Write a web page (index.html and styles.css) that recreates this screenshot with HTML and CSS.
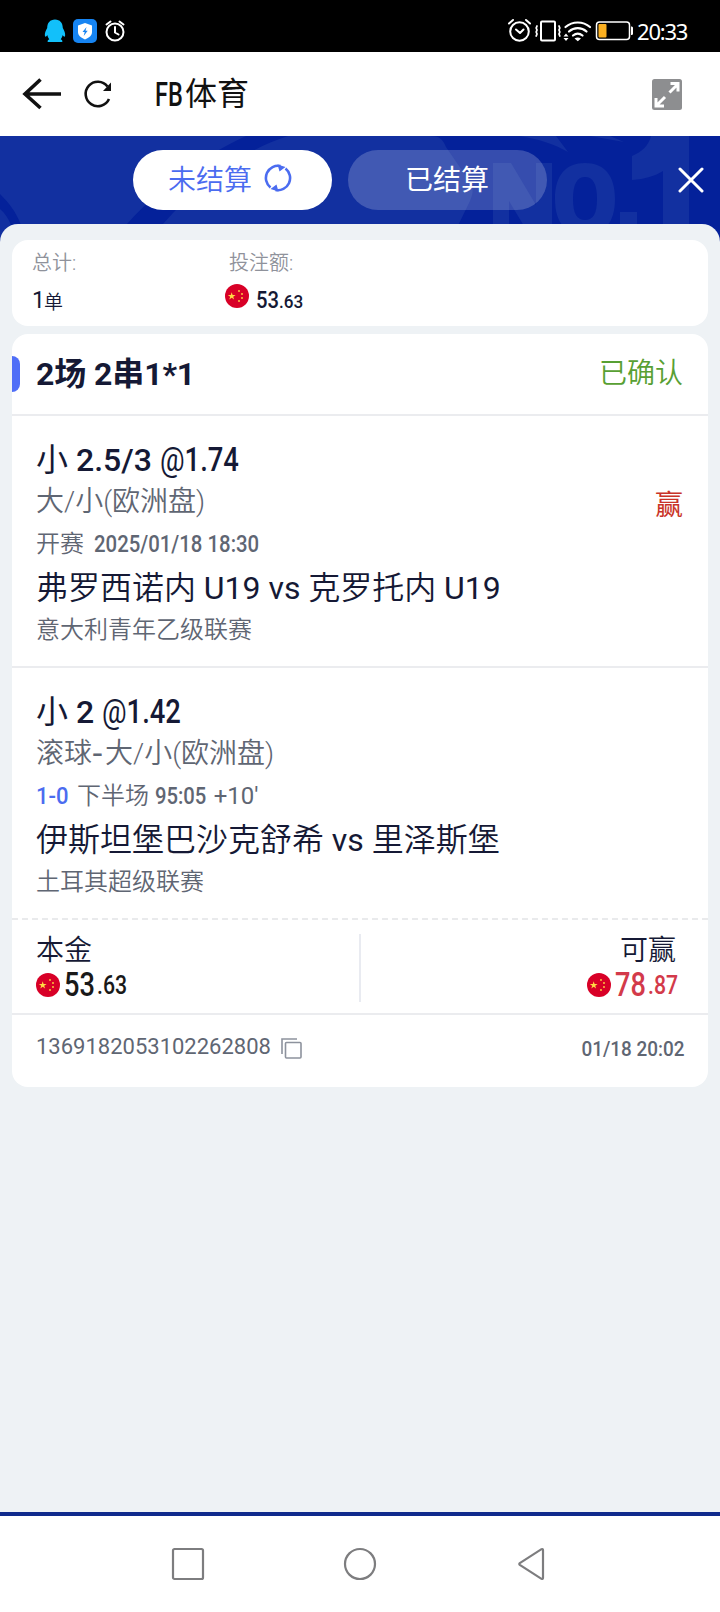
FILE: index.html
```html
<!DOCTYPE html>
<html lang="zh-CN">
<head>
<meta charset="utf-8">
<title>FB体育</title>
<link rel="stylesheet" href="styles.css">
</head>
<body>
<svg class="defs" width="0" height="0">
  <symbol id="flag" viewBox="0 0 24 24">
    <circle cx="12" cy="12" r="12" fill="#d80027"/>
    <path d="M6.700 8.200l.9 2.800h3l-2.400 1.700.9 2.800-2.400-1.700-2.400 1.700.9-2.800L2.800 11h3z" fill="#ffda44"/>
    <g fill="#ffda44"><circle cx="14" cy="7" r=".9"/><circle cx="17" cy="10" r=".9"/><circle cx="17" cy="14" r=".9"/><circle cx="14" cy="17" r=".9"/></g>
  </symbol>
</svg>
<div class="screen">
  <div class="status">
    <svg class="status-left" width="86" height="28" viewBox="44 17 86 28">
      <path d="M55 19.500c5 0 7.800 3.500 7.800 8.500 1.500 2.500 2.700 5.500 2.300 7.800-.3 1.500-1.500.8-2.400-.8-.4 1.800-1 3-2 4.200 1.300.6 1.900 1.400 1.600 2.800h-14.600c-.3-1.400.3-2.200 1.600-2.800-1-1.200-1.600-2.400-2-4.200-.9 1.600-2.100 2.300-2.400.8-.4-2.300.8-5.300 2.300-7.800 0-5 2.800-8.500 7.800-8.500z" fill="#12c0fa"/>
      <rect x="73" y="19" width="24" height="24" rx="5" fill="#1684f2"/>
      <path d="M85 23l7 2.500v6.500c0 3.500-3 5.800-7 7.500-4-1.700-7-4-7-7.500v-6.500z" fill="#fff"/>
      <path d="M86.500 27l-4 5h2.200l-1 4 4-5.200h-2.200z" fill="#1684f2"/>
      <g fill="none" stroke="#fff" stroke-width="2" stroke-linecap="round"><circle cx="115" cy="32" r="8.500"/><path d="M115 27v5.500l3.500 2M106.500 24.500l4-3M123.500 24.500l-4-3"/></g>
    </svg>
    <div class="status-right">
      <svg width="130" height="26" viewBox="507 18 130 26">
        <g fill="none" stroke="#fff" stroke-width="2" stroke-linecap="round" stroke-linejoin="round">
          <circle cx="520.500" cy="31.500" r="9.300"/><path d="M517 29.500l4 3.500 3.500-3.500M510 23.500l4-3.500M531 23.500l-4-3.500"/>
          <rect x="542" y="21.500" width="14" height="19" rx="1"/>
          <path d="M538 26l-.8 2 .8 2-.8 2 .8 2-.8 2M560 26l.8 2-.8 2 .8 2-.8 2 .8 2" stroke-width="1.800"/>
          <path d="M566.500 27c7-6 17.500-6 24.500 0M570 31.500c5-4.500 12.500-4.500 17.500 0M574 35.500c3-2.500 6.500-2.500 9.500 0" stroke-width="2.200"/>
          <rect x="597.500" y="22" width="33" height="17.500" rx="3" stroke-width="1.500"/>
        </g>
        <path d="M575.500 38.500c2-1.500 4.500-1.500 6.500 0l-3.200 2.700zM564.500 36.500l2.500-3 2.500 3zM564.500 38l2.500 3 2.500-3zM632 26.500c1.500 0 2 .5 2 1.500v5.500c0 1-.5 1.500-2 1.500z" fill="#fff"/>
        <rect x="599.500" y="24" width="8" height="13.500" rx="1" fill="#fbb021"/>
      </svg>
      <span class="clock">20:33</span>
    </div>
  </div>

  <div class="appbar">
    <svg width="90" height="32" viewBox="22 78 90 32" fill="none" stroke="#111">
      <path d="M40.500 79.500L25 94l15.500 14M25 94h36" stroke-width="3.600"/>
      <path d="M109 99a12.200 12.200 0 1 1-1.500-12.500" stroke-width="2.600"/>
      <path d="M111 82.500v8.500h-8z" fill="#111" stroke="none"/>
    </svg>
    <h1 class="title"><span class="title-latin">FB</span>体育</h1>
    <svg class="expand" width="30" height="31" viewBox="0 0 30 31">
      <rect width="30" height="31" rx="2.500" fill="#8d8e90"/>
      <g fill="none" stroke="#fff" stroke-width="3"><path d="M17.500 13.500l8-8M18.500 4.500h7.500v8M13 18l-8 8M4 19v8h8"/></g>
    </svg>
  </div>

  <div class="tabs">
    <svg class="tabs-art" width="720" height="110" viewBox="0 136 720 110">
      <rect y="136" width="720" height="110" fill="#04219a"/>
      <path d="M0 136h430c9 0 13 3 16 11l24 35c4 7 3 12 0 19l-22 45H0z" fill="#1230a0"/>
      <path d="M246 136h42c-45 14-90 48-125 88l-20 22h-38l22-22c38-42 80-70 119-88zM0 194c9 9 16 18 21 31h-10c-3-7-6-12-11-16z" fill="#04219a"/>
      <path d="M519 136h37l12 16c-14-8-29-13-49-16zM590 136h20l14 6z" fill="#1230a0"/>
      <g fill="#1230a0">
        <path d="M493 163h18l25 42v-42h16v83h-16l-27-45v45h-16z"/>
        <path fill-rule="evenodd" d="M585 163c19 0 30 12 30 36s-11 36-30 36-30-12-30-36 11-36 30-36zm0 14c-8 0-12 7-12 22s4 21 12 21 12-6 12-21-4-22-12-22z"/>
        <path d="M620 212h17v20h-17zM651 136h38v110h-26v-75c-8 5-18 8-31 9v-24c10-4 17-11 19-20z"/>
      </g>
    </svg>
    <div class="pill pill-active">未结算
      <svg width="28" height="28" viewBox="0 0 28 28" fill="none" stroke="#4b6cf0" stroke-width="2.600"><path d="M6.500 23.500a12.200 12.200 0 0 1 10-21.500M21.500 4.500a12.200 12.200 0 0 1-10 21.500"/><path d="M13.500.5l8 2.500-6 4.500zM14.500 27.500l-8-2.500 6-4.500z" fill="#4b6cf0" stroke="none"/></svg>
    </div>
    <div class="pill">已结算</div>
    <svg class="close" width="26" height="26" viewBox="0 0 26 26" stroke="#fff" stroke-width="3" stroke-linecap="round"><path d="M2 2l22 22M24 2L2 24"/></svg>
  </div>

  <main class="panel">
    <section class="card summary">
      <div class="sum-item"><div class="sum-label">总计:</div><div class="sum-value"><span class="din sum-count">1</span><small>单</small></div></div>
      <div class="sum-item"><div class="sum-label sum-label-in">投注额:</div><div class="sum-value"><svg class="flag"><use href="#flag"/></svg><span class="din sum-int">53</span><span class="din sum-dec">.63</span></div></div>
    </section>

    <section class="card ticket">
      <header class="ticket-head"><i class="marker"></i><h2 class="ticket-title">2场 2串1*1</h2><span class="ok">已确认</span></header>

      <article class="event">
        <div class="pick"><span class="side">小</span> 2.5/3 <span class="din odds"><span class="at">@</span>1.74</span></div>
        <div class="market">大/小(欧洲盘)</div>
        <div class="meta">开赛 <span class="din kick">2025/01/18 18:30</span></div>
        <div class="teams">弗罗西诺内 <span class="latin">U19 vs</span> 克罗托内 <span class="latin">U19</span></div>
        <div class="league">意大利青年乙级联赛</div>
        <span class="won">赢</span>
      </article>

      <article class="event">
        <div class="pick"><span class="side">小</span> 2 <span class="din odds"><span class="at">@</span>1.42</span></div>
        <div class="market">滚球<span class="hyphen">-</span>大/小(欧洲盘)</div>
        <div class="meta"><span class="din score">1-0</span>下半场 <span class="din period">95:05</span> <span class="latin">+10'</span></div>
        <div class="teams">伊斯坦堡巴沙克舒希 <span class="latin">vs</span> 里泽斯堡</div>
        <div class="league">土耳其超级联赛</div>
      </article>

      <svg class="dash" width="696" height="2"><path d="M0 1h696" stroke="#e9eaec" stroke-width="2" stroke-dasharray="6 4"/></svg>
      <div class="money">
        <div class="stake"><div class="money-label">本金</div><div class="amount"><svg class="flag"><use href="#flag"/></svg><span class="din int">53</span><span class="din dec">.63</span></div></div>
        <i class="split"></i>
        <div class="stake win"><div class="money-label">可赢</div><div class="amount red"><svg class="flag"><use href="#flag"/></svg><span class="din int">78</span><span class="din dec">.87</span></div></div>
      </div>
      <footer class="foot">
        <span class="order">1369182053102262808</span>
        <svg class="copy" width="21" height="21" viewBox="0 0 21 21" fill="none" stroke="#8d929d" stroke-width="1.600"><path d="M1 16V1h15"/><rect x="4.500" y="4.500" width="15.500" height="15.500" rx="1"/></svg>
        <span class="din placed">01/18 20:02</span>
      </footer>
    </section>
  </main>

  <nav class="navbar">
    <svg width="34" height="34" viewBox="0 0 34 34"><rect x="2" y="2" width="30" height="30" rx="1.500"/></svg>
    <svg width="34" height="34" viewBox="0 0 34 34"><circle cx="17" cy="17" r="15"/></svg>
    <svg width="34" height="34" viewBox="0 0 34 34"><path d="M4.800 16.200L26.500 2.200Q28 1.500 28 3.200v27.600Q28 32.500 26.500 31.800L4.800 17.800Q3.800 17 4.800 16.200z"/></svg>
  </nav>
</div>
</body>
</html>
```

FILE: styles.css
```css
* { box-sizing: border-box; }
body { margin: 0; font-family: Roboto, "Noto Sans CJK SC", sans-serif; color: #151935; }
.defs { position: absolute; }
.screen { width: 720px; height: 1612px; display: flex; flex-direction: column; background: #04219a; overflow: hidden; }

.status { height: 52px; flex: none; background: #000; color: #fff; display: flex; justify-content: space-between; padding: 17px 31px 0 44px; }
.status-right { display: flex; align-items: flex-start; gap: 1px; }
.status-right svg { margin-top: 1px; }
.clock { font-size: 22px; line-height: 28px; width: 52px; white-space: nowrap; font-family: "Noto Sans", sans-serif; letter-spacing: -1.2px; }

.appbar { height: 84px; flex: none; display: flex; align-items: center; padding: 0 38px 0 22px; background: #fff; }
.title { margin: 0 0 0 43px; font-size: 32px; font-weight: 400; line-height: 40px; color: #111; flex: 1; display: flex; }
.title-latin { display: block; width: 30px; font-weight: 500; font-size: 34px; transform: scaleX(.69); transform-origin: left; }

.tabs { position: relative; height: 88px; flex: none; display: flex; gap: 16px; padding: 14px 16px 0 133px; }
.tabs-art { position: absolute; left: 0; top: 0; }
.pill { position: relative; width: 199px; height: 60px; border-radius: 30px; background: rgba(255,255,255,.2); color: #fff; font-size: 28px; display: flex; align-items: center; justify-content: center; gap: 12px; padding: 0 1px 4px 0; }
.pill-active { background: #fff; color: #4b6cf0; font-weight: 350; padding-right: 5px; }
.close { position: relative; margin: 17px 0 0 auto; }

.panel { position: relative; flex: 1; background: #eef2f5; border-radius: 18px 18px 0 0; padding: 16px 12px 0; }
.card { background: #fff; border-radius: 16px; }
.summary { height: 86px; display: flex; padding: 8px 20px 0; }
.sum-item { width: 193px; }
.sum-label { font-size: 20px; line-height: 30px; color: #8f929b; font-weight: 350; }
.sum-label-in { padding-left: 4px; }
.sum-value { height: 42px; display: flex; align-items: center; font-size: 22px; padding-top: 2px; }
.sum-value small { font-size: 19px; font-weight: 350; }
.sum-value .flag { margin-top: -8px; }
.flag { width: 24px; height: 24px; flex: none; }

.din { display: inline-block; transform-origin: left; white-space: nowrap; font-weight: 500; }
.sum-count { font-weight: 400; font-size: 23px; width: 12px; }
.sum-int { width: 23px; margin-left: 7px; font-size: 23px; transform: scaleX(.88); }
.sum-dec { font-size: 19px; transform: scaleX(.9); padding-top: 2px; }

.ticket { margin-top: 8px; height: 753px; }
.ticket-head { height: 82px; display: flex; align-items: center; padding: 0 25px 0 0; border-bottom: 2px solid #ebecef; }
.marker { width: 8px; height: 36px; background: #4f6ef7; border-radius: 0 8px 8px 0; }
.ticket-title { margin: 0 auto 0 16px; font-size: 32px; font-weight: 700; line-height: 40px; letter-spacing: -.1px; }
.ok { font-size: 28px; line-height: 36px; color: #58a033; font-weight: 350; }

.event { position: relative; height: 252px; padding: 23px 24px 0; border-bottom: 2px solid #ebecef; white-space: nowrap; }
.event + .event { border-bottom: 0; height: 250px; }
.pick { font-size: 32px; font-weight: 500; line-height: 42px; }
.side { font-weight: 400; }
.latin { font-weight: 400; }
.odds { font-size: 33px; line-height: 42px; transform: scaleX(.83); }
.at { font-weight: 400; }
.market { font-size: 28px; line-height: 42px; color: #5f6673; font-weight: 350; }
.hyphen { display: inline-block; width: 13px; font-weight: 500; transform: scaleX(1.15); transform-origin: left; }
.meta { font-size: 24px; line-height: 42px; color: #5f6673; font-weight: 350; }
.kick { font-size: 23px; margin-left: 4px; transform: scaleX(.885); }
.score { font-size: 24px; width: 41px; transform: scaleX(.92); color: #4b6cf0; }
.period { font-size: 23px; width: 53px; transform: scaleX(.88); }
.teams { font-size: 32px; line-height: 44px; font-weight: 350; }
.league { font-size: 24px; line-height: 40px; color: #5f6673; font-weight: 350; }
.won { position: absolute; right: 25px; top: 69px; font-size: 28px; line-height: 42px; color: #c93328; }

.dash { display: block; }
.money { height: 93px; display: flex; justify-content: space-between; padding: 15px 24px 0; }
.stake { width: 150px; }
.money-label { font-size: 28px; line-height: 32px; font-weight: 350; }
.amount { display: flex; align-items: center; height: 36px; color: #191919; }
.int { font-size: 34px; width: 33px; margin-left: 4px; transform: scaleX(.8); padding-bottom: 2px; }
.dec { font-size: 25px; width: 30px; transform: scaleX(.85); }
.split { width: 2px; height: 68px; margin-top: -1px; background: #e9ebf1; }
.win { display: flex; flex-direction: column; align-items: flex-end; padding-right: 6px; }
.win .money-label { margin-right: 2px; }
.red { color: #d33a4a; }
.foot { border-top: 2px solid #ebecef; height: 74px; display: flex; align-items: center; padding: 0 24px 8px; }
.order { font-size: 22px; color: #5f6673; margin-top: -2px; }
.copy { margin: 2px 0 0 10px; }
.placed { margin-left: auto; transform-origin: right; transform: scaleX(.9); font-size: 21px; color: #5f6673; margin-top: 4px; }

.navbar { height: 100px; flex: none; border-top: 4px solid #102a8c; display: flex; justify-content: center; gap: 138px; padding-top: 31px; background: #fff; }
.navbar svg { fill: none; stroke: #7d7d7f; stroke-width: 2.200; }
```
